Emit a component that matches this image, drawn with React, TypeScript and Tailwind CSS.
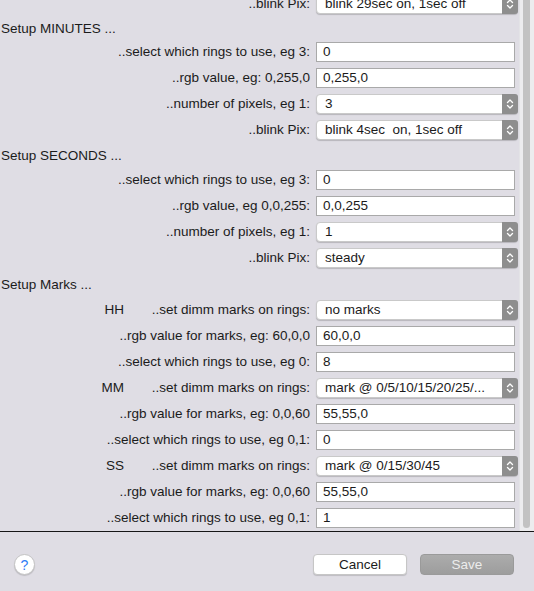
import React from "react";

type Row =
    | { kind: "header"; text: string; h: string }
    | { kind: "text"; label: string; value: string; tag?: string }
    | { kind: "select"; label: string; value: string; tag?: string };

const rows: Row[] = [
    { kind: "select", label: "..blink Pix:", value: "blink 29sec on, 1sec off" },
    { kind: "header", text: "Setup MINUTES ...", h: "h-[22px]" },
    { kind: "text", label: "..select which rings to use, eg 3:", value: "0" },
    { kind: "text", label: "..rgb value, eg: 0,255,0", value: "0,255,0" },
    { kind: "select", label: "..number of pixels, eg 1:", value: "3" },
    { kind: "select", label: "..blink Pix:", value: "blink 4sec  on, 1sec off" },
    { kind: "header", text: "Setup SECONDS ...", h: "h-[24px]" },
    { kind: "text", label: "..select which rings to use, eg 3:", value: "0" },
    { kind: "text", label: "..rgb value, eg 0,0,255:", value: "0,0,255" },
    { kind: "select", label: "..number of pixels, eg 1:", value: "1" },
    { kind: "select", label: "..blink Pix:", value: "steady" },
    { kind: "header", text: "Setup Marks ...", h: "h-[26px]" },
    { kind: "select", tag: "HH", label: "..set dimm marks on rings:", value: "no marks" },
    { kind: "text", label: "..rgb value for marks, eg: 60,0,0", value: "60,0,0" },
    { kind: "text", label: "..select which rings to use, eg 0:", value: "8" },
    { kind: "select", tag: "MM", label: "..set dimm marks on rings:", value: "mark @ 0/5/10/15/20/25/..." },
    { kind: "text", label: "..rgb value for marks, eg: 0,0,60", value: "55,55,0" },
    { kind: "text", label: "..select which rings to use, eg 0,1:", value: "0" },
    { kind: "select", tag: "SS", label: "..set dimm marks on rings:", value: "mark @ 0/15/30/45" },
    { kind: "text", label: "..rgb value for marks, eg: 0,0,60", value: "55,55,0" },
    { kind: "text", label: "..select which rings to use, eg 0,1:", value: "1" },
];

function Chevrons() {
    return (
        <svg width="8" height="12" viewBox="0 0 8 12" fill="none">
            <path d="M1.5 4.5 L4 2 L6.5 4.5" stroke="white" strokeWidth="1.3" strokeLinecap="round" strokeLinejoin="round" />
            <path d="M1.5 7.5 L4 10 L6.5 7.5" stroke="white" strokeWidth="1.3" strokeLinecap="round" strokeLinejoin="round" />
        </svg>
    );
}

function PopUp({ value }: { value: string }) {
    return (
        <div className="flex h-[20px] w-[202px] rounded-[4px] bg-white border border-[#c9c9c9] shadow-[0_1px_1px_rgba(0,0,0,0.18)]">
            <span className="flex-1 pl-[8px] leading-[18px] whitespace-pre overflow-hidden">{value}</span>
            <span className="w-[16px] flex items-center justify-center rounded-r-[3px] bg-[#8e8e8e] -my-px -mr-px">
                <Chevrons />
            </span>
        </div>
    );
}

function Field({ value }: { value: string }) {
    return (
        <div className="h-[20px] w-[199px] bg-white border border-[#a9a9a9] pl-[6px] leading-[18px]">
            {value}
        </div>
    );
}

function FormRow({ row }: { row: Row }) {
    if (row.kind === "header") {
        return <div className={`${row.h} flex items-center pl-[1px] pt-[3px]`}>{row.text}</div>;
    }
    return (
        <div className="h-[26px] flex items-center">
            <div className="w-[310px] flex justify-end whitespace-pre">
                {row.tag && <span className="w-[124px] text-right">{row.tag}</span>}
                <span className="flex-1 text-right">{row.label}</span>
            </div>
            <div className="ml-[6px]">
                {row.kind === "select" ? <PopUp value={row.value} /> : <Field value={row.value} />}
            </div>
        </div>
    );
}

export default function App() {
    return (
        <div className="w-[534px] h-[591px] overflow-hidden flex flex-col bg-[#dfdde4] text-[13.5px] text-[#1b1b1b] font-['Liberation_Sans',Arial,sans-serif]">
            <div className="h-[531px] flex overflow-hidden">
                <div className="flex-1 overflow-hidden">
                    <div className="-mt-[9px]">
                        {rows.map((row, i) => (
                            <FormRow key={i} row={row} />
                        ))}
                    </div>
                </div>
                {/* scroller */}
                <div className="w-[15px] bg-[#ececee] border-l border-[#e3e3e6] overflow-hidden">
                    <div className="ml-[3px] w-[7px] h-[538px] -mt-[10px] rounded-full bg-[#c2c2c2]" />
                </div>
            </div>
            <div className="h-px bg-[#161616]" />

            <div className="flex-1 flex items-start pt-[22px] pl-[14px] pr-[20px]">
                <button className="w-[21px] h-[21px] rounded-full bg-white border border-[#c4c4c4] shadow-[0_1px_1px_rgba(0,0,0,0.15)] text-[#2f7cf6] text-[14px] leading-none flex items-center justify-center">
                    ?
                </button>
                <div className="ml-auto flex gap-[13px]">
                    <button className="w-[94px] h-[21px] rounded-[4px] bg-white border border-[#c6c6c6] shadow-[0_1px_1px_rgba(0,0,0,0.15)] text-[#1b1b1b]">
                        Cancel
                    </button>
                    <button className="w-[94px] h-[21px] rounded-[4px] bg-gradient-to-b from-[#acacac] to-[#9d9d9d] border border-[#9a9a9a] text-[#ececec]">
                        Save
                    </button>
                </div>
            </div>
        </div>
    );
}
